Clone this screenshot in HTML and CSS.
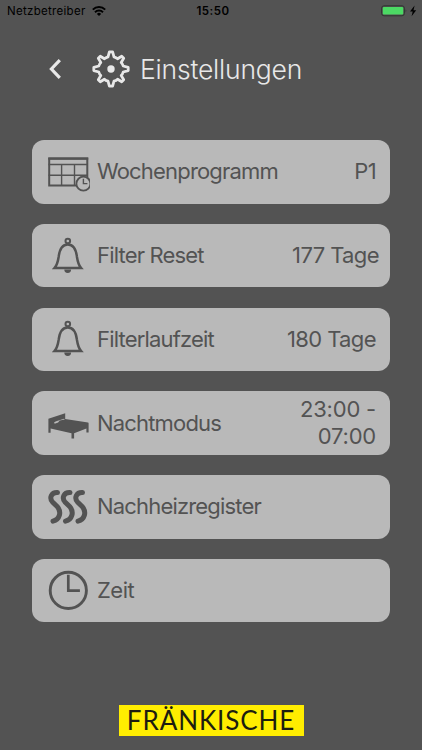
FILE: index.html
```html
<!DOCTYPE html>
<html lang="de">
<head>
<meta charset="utf-8">
<title>Einstellungen</title>
<link rel="stylesheet" href="styles.css">
</head>
<body>
<div class="status">
  <div class="carrier"><span class="carrier-name">Netzbetreiber</span>
    <svg class="wifi" viewBox="0 0 14 10" width="14" height="10"><g fill="none" stroke="#000" stroke-width="2"><path d="M.8 3.6a8.8 8.8 0 0 1 12.4 0"/><path d="M3 6.2a5.7 5.7 0 0 1 8 0"/></g><path d="M7 10 4.9 7.9a3 3 0 0 1 4.2 0z"/></svg>
  </div>
  <div class="clock">15:50</div>
  <div class="power">
    <svg viewBox="0 0 38 12" width="38" height="12"><rect x=".6" y=".8" width="22.8" height="10" rx="2.4" fill="none" stroke="#303531" stroke-width="1"/><rect x="1.8" y="2" width="20.4" height="7.6" rx="1" fill="#4cd964"/><path d="M24.6 4.2q1.5 1.6 0 3.2z" fill="#303531"/><path d="M33.6.6 29 6.6h2.7l-1.1 4.6 4.6-6h-2.7z"/></svg>
  </div>
</div>
<header class="header">
  <svg class="back" viewBox="0 0 14 22" width="14" height="22"><path d="M11.8 2.2 3.4 11l8.4 8.8" fill="none" stroke="#e8e8e8" stroke-width="3.2"/></svg>
  <svg class="gear" viewBox="-19 -19 38 38" width="38" height="38"><path d="M-1.6-17.2H1.6L3-12.2Q5.2-11.6 6.6-10.2L10.7-12.7 12.7-10.7 10.2-6.6Q11.6-5.2 12.2-3L17.2-1.6V1.6L12.2 3Q11.6 5.2 10.2 6.6L12.7 10.7 10.7 12.7 6.6 10.2Q5.2 11.6 3 12.2L1.6 17.2H-1.6L-3 12.2Q-5.2 11.6-6.6 10.2L-10.7 12.7-12.7 10.7-10.2 6.6Q-11.6 5.2-12.2 3L-17.2 1.6V-1.6L-12.2-3Q-11.6-5.2-10.2-6.6L-12.7-10.7-10.7-12.7-6.6-10.2Q-5.2-11.6-3-12.2Z" fill="none" stroke="#e8e8e8" stroke-width="2.8" stroke-linejoin="round"/><circle r="3.7" fill="#e8e8e8"/></svg>
  <h1 class="title">Einstellungen</h1>
</header>
<main class="list">
  <div class="card">
    <svg class="icon" viewBox="0 0 44 44" width="44" height="44"><g fill="none" stroke="#535353"><path d="M3.2 8.4h38.1v27H3.2z" stroke-width="2"/><path d="M2.3 8.6h39.9" stroke-width="2.4"/><path d="M2.5 14.5h39M2.5 25.3h39M15.6 14.5v21M28.5 14.5v21" stroke-width="1.4"/><circle cx="37.4" cy="33.7" r="7" fill="#b9b9b9" stroke-width="1.8"/><path d="M37.4 28.8v4.8h4" stroke-width="1.4"/></g></svg>
    <span class="label">Wochenprogramm</span><span class="value">P1</span>
  </div>
  <div class="card">
    <svg class="icon" viewBox="0 0 44 44" width="44" height="44"><g fill="none" stroke="#535353"><circle cx="21.8" cy="7" r="2.3" stroke-width="2"/><path d="M8.5 34.1C11.6 30.5 12 27 12.7 22.5 13.6 15.4 15.9 10.4 21.8 10.4S30 15.4 30.9 22.5C31.6 27 32 30.5 35.1 34.1Z" stroke-width="2.5"/></g><path d="M18.3 35.6h6.8a3.4 3.4 0 0 1-6.8 0" fill="#535353"/></svg>
    <span class="label">Filter Reset</span><span class="value value-wide">177 Tage</span>
  </div>
  <div class="card">
    <svg class="icon" viewBox="0 0 44 44" width="44" height="44"><g fill="none" stroke="#535353"><circle cx="21.8" cy="7" r="2.3" stroke-width="2"/><path d="M8.5 34.1C11.6 30.5 12 27 12.7 22.5 13.6 15.4 15.9 10.4 21.8 10.4S30 15.4 30.9 22.5C31.6 27 32 30.5 35.1 34.1Z" stroke-width="2.5"/></g><path d="M18.3 35.6h6.8a3.4 3.4 0 0 1-6.8 0" fill="#535353"/></svg>
    <span class="label">Filterlaufzeit</span><span class="value">180 Tage</span>
  </div>
  <div class="card">
    <svg class="icon" viewBox="0 0 44 44" width="44" height="44"><path d="M2.4 17.7 19.2 12.3V18L42 21.4q.6.1.6.9v9.2h-2.2v-4L28.1 32.3v5.3h-2.6v-5.3L4.6 27.4v4.3H2.4z" fill="#535353"/><path d="M7.8 22.2q.5-1.4 2.4-2L18 17.8l.8.8-5 1q-1.2 2.3-4.4 3z" fill="#b9b9b9"/></svg>
    <span class="label">Nachtmodus</span><span class="value value-time">23:00 -<br>07:00</span>
  </div>
  <div class="card">
    <svg class="icon" viewBox="0 0 44 44" width="44" height="44"><g fill="none" stroke="#535353" stroke-width="5" stroke-linecap="round"><path d="M11.5 7.6C5.3 7.3 3 12.9 6.5 17l4.6 4.4C16 27 13.6 34.4 7 36.2"/><path d="M24 7.6C17.8 7.3 15.5 12.9 19 17l4.6 4.4C28.5 27 26.1 34.4 19.5 36.2"/><path d="M36.5 7.6C30.3 7.3 28 12.9 31.5 17l4.6 4.4C41 27 38.6 34.4 32 36.2"/></g></svg>
    <span class="label">Nachheizregister</span>
  </div>
  <div class="card">
    <svg class="icon" viewBox="0 0 44 44" width="44" height="44"><g fill="none" stroke="#535353"><circle cx="22.3" cy="21.4" r="18.1" stroke-width="2.9"/><path d="M22.3 5.8v15.8h11.6" stroke-width="2.7"/></g></svg>
    <span class="label label-short">Zeit</span>
  </div>
</main>
<footer class="footer"><div class="brand">FRÄNKISCHE</div></footer>
</body>
</html>
```
FILE: styles.css
```css
* { box-sizing: border-box; }
body {
  margin: 0;
  width: 422px;
  height: 750px;
  overflow: hidden;
  display: flex;
  flex-direction: column;
  background: #535353;
  color: #535353;
  font-family: Inter, "Liberation Sans", sans-serif;
}
.status {
  height: 22px;
  padding: 0 3px 0 7px;
  display: grid;
  grid-template-columns: 1fr 50px 1fr;
  align-items: center;
  color: #000;
  font-size: 11.5px;
}
.carrier { display: flex; align-items: center; gap: 6px; }
.carrier-name { letter-spacing: .3px; }
.clock { font-weight: 600; text-align: center; letter-spacing: .5px; }
.power { display: flex; justify-content: flex-end; }
.header {
  height: 94px;
  padding-left: 48px;
  display: flex;
  align-items: center;
}
.gear { margin: -1px 0 0 30px; }
.title {
  margin: 0 0 0 10px;
  color: #e8e8e8;
  font-size: 26.5px;
  font-weight: 350;
  letter-spacing: -.2px;
}
.list {
  margin: 24px 32px 0;
  display: flex;
  flex-direction: column;
  gap: 20.3px;
}
.card {
  height: 63.5px;
  padding: 0 14px;
  display: flex;
  align-items: center;
  border-radius: 12px;
  background: #b9b9b9;
  font-size: 22px;
  letter-spacing: -.82px;
}
.icon { flex: none; margin-right: 7px; }
.label { margin-top: -1px; white-space: nowrap; }
.label-short { letter-spacing: -.5px; }
.value {
  margin-top: -1px;
  margin-left: auto;
  text-align: right;
  letter-spacing: -.6px;
  line-height: 26.5px;
  white-space: nowrap;
}
.value-wide { margin-right: -3px; }
.value-time { letter-spacing: -.2px; }
.footer {
  margin-top: 83px;
  display: flex;
  justify-content: center;
}
.brand {
  width: 185px;
  height: 31px;
  background: #ffed00;
  color: #1d1d10;
  font: 400 26px/31px Lato, sans-serif;
  text-align: center;
  letter-spacing: .9px;
}
```
